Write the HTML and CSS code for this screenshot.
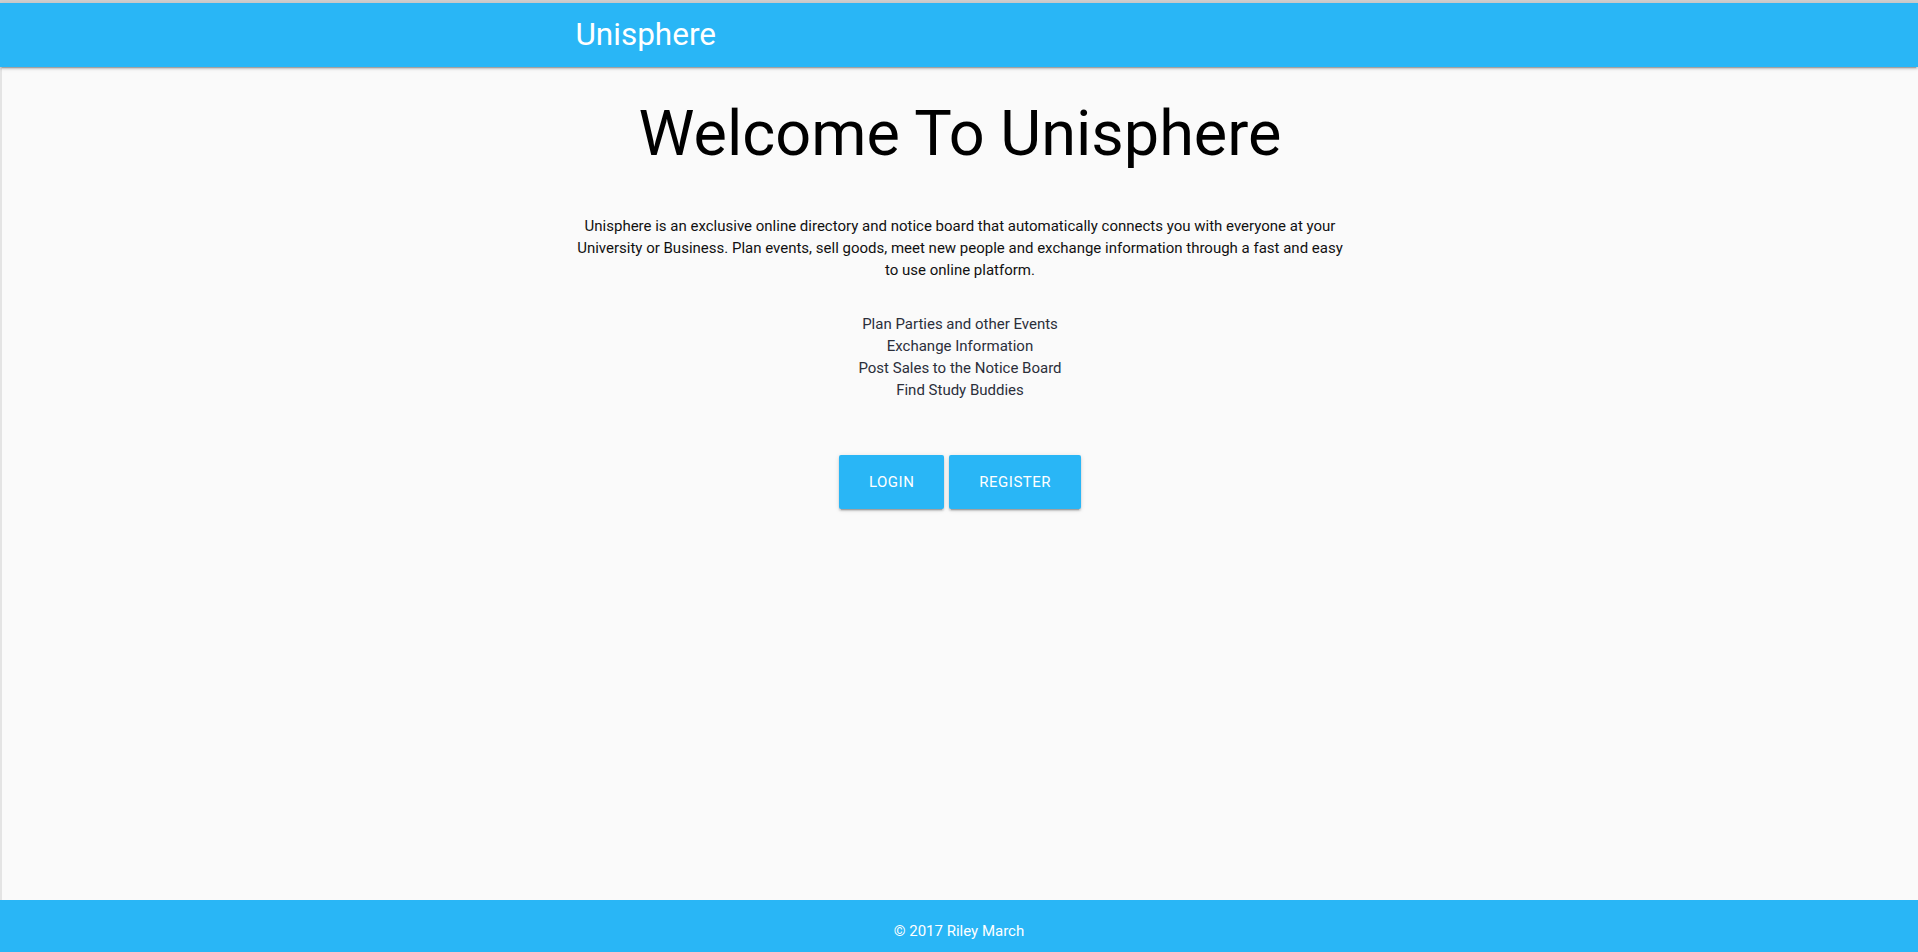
FILE: index.html
```html
<!DOCTYPE html>
<html lang="en">
<head>
<meta charset="utf-8">
<title>Unisphere</title>
<link rel="stylesheet" href="styles.css">
</head>
<body>
<div class="page">
  <div class="topline"></div>
  <nav class="navbar">
    <div class="container">
      <span class="brand">Unisphere</span>
    </div>
  </nav>
  <main class="main">
    <div class="container center">
      <h1 class="title">Welcome To Unisphere</h1>
      <p class="intro">Unisphere is an exclusive online directory and notice board that automatically connects you with everyone at your University or Business. Plan events, sell goods, meet new people and exchange information through a fast and easy to use online platform.</p>
      <ul class="features">
        <li>Plan Parties and other Events</li>
        <li>Exchange Information</li>
        <li>Post Sales to the Notice Board</li>
        <li>Find Study Buddies</li>
      </ul>
      <div class="actions">
        <a class="btn" href="#">Login</a>
        <a class="btn" href="#">Register</a>
      </div>
    </div>
  </main>
  <footer class="footer">© 2017 Riley March</footer>
</div>
</body>
</html>
```

FILE: styles.css
```css
html, body {
  margin: 0;
  padding: 0;
}
body {
  background: #fafafa;
  font-family: Roboto, "Liberation Sans", sans-serif;
  color: rgba(0, 0, 0, 0.87);
}
.page {
  min-height: 100vh;
  display: flex;
  flex-direction: column;
}
.topline {
  height: 3px;
  background: #cfcfcf;
}
.navbar {
  height: 64px;
  background: #29b6f6;
  box-shadow: 0 2px 2px 0 rgba(0,0,0,0.14), 0 1px 5px 0 rgba(0,0,0,0.12), 0 3px 1px -2px rgba(0,0,0,0.2);
  position: relative;
  z-index: 2;
  display: flex;
  align-items: center;
}
.container {
  width: 40%;
  margin: 0 auto;
}
.brand {
  color: #fff;
  font-size: 31.5px;
  line-height: 64px;
  display: block;
}
.main {
  flex: 1;
  border-left: 2px solid #e4e4e4;
}
.center {
  text-align: center;
}
.title {
  font-size: 63px;
  font-weight: 400;
  line-height: 110%;
  margin: 32px 0 0;
  color: #000;
}
.intro {
  font-size: 15px;
  line-height: 22px;
  margin: 47px 0 0;
  color: #111;
}
.features {
  list-style: none;
  padding: 0;
  margin: 32px 0 0;
  font-size: 15px;
  line-height: 22px;
  color: #2b2f3a;
}
.actions {
  margin-top: 54px;
  display: flex;
  justify-content: center;
  gap: 5px;
}
.btn {
  display: inline-block;
  height: 54px;
  line-height: 54px;
  padding: 0 30px;
  background: #29b6f6;
  color: #fff;
  text-decoration: none;
  text-transform: uppercase;
  font-size: 15px;
  letter-spacing: .5px;
  border-radius: 2px;
  box-shadow: 0 2px 2px 0 rgba(0,0,0,0.14), 0 1px 5px 0 rgba(0,0,0,0.12), 0 3px 1px -2px rgba(0,0,0,0.2);
}
.footer {
  background: #29b6f6;
  color: #fff;
  height: 52px;
  line-height: 63px;
  text-align: center;
  font-size: 15px;
}
```
